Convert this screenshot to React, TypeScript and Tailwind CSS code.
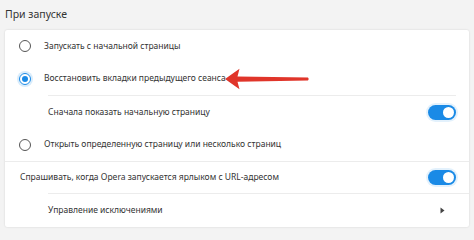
import React from 'react';

function Radio({ checked }: { checked?: boolean }) {
  if (checked) {
    return (
      <span className="flex h-[12px] w-[12px] shrink-0 items-center justify-center rounded-full border-[1.5px] border-[#1a8ae6] shadow-[0_0_0_2px_#d9ecfb]">
        <span className="h-[6px] w-[6px] rounded-full bg-[#1a8ae6]" />
      </span>
    );
  }
  return <span className="h-[12px] w-[12px] shrink-0 rounded-full border-[1.5px] border-[#555]" />;
}

function Toggle() {
  return (
    <span className="flex h-[15px] w-[28px] shrink-0 items-center justify-end rounded-full bg-[#1a8ae6] pr-[2px] shadow-[0_0_0_2px_#e3f1fc]">
      <span className="h-[11px] w-[11px] rounded-full bg-white" />
    </span>
  );
}

function Arrow() {
  return (
    <svg className="pointer-events-none absolute left-[224px] top-[68px]" width="86" height="22" viewBox="0 0 86 22">
      <path d="M1 11 L15.5 0.8 L13.5 8.4 L84 9.6 Q85.5 11 84 12.4 L13.5 13.8 L15.5 21.2 Z" fill="#e0352a" />
    </svg>
  );
}

export default function App() {
  const text = 'text-[8.5px] text-[#333]';
  return (
    <div className="relative h-[240px] w-[474px] overflow-hidden bg-[#f3f3f3] font-['Noto_Sans',sans-serif]">
      <div className="flex h-[30px] items-center px-[5px] text-[10.5px] text-[#333]">При запуске</div>
      <div className="mx-[5px] flex flex-col rounded-[2px] bg-white shadow-[0_0_2px_rgba(0,0,0,0.15)]">
        <div className="flex h-[32px] items-center gap-[13px] pl-[14px]">
          <Radio />
          <span className={text}>Запускать с начальной страницы</span>
        </div>
        <div className="flex h-[33px] items-center gap-[13px] pl-[14px]">
          <Radio checked />
          <span className={text}>Восстановить вкладки предыдущего сеанса</span>
        </div>
        <div className="ml-[43px] mr-[13px] h-px bg-[#ececec]" />
        <div className="flex h-[32px] items-center justify-between pl-[43px] pr-[13px]">
          <span className={text}>Сначала показать начальную страницу</span>
          <Toggle />
        </div>
        <div className="flex h-[33px] items-center gap-[13px] pl-[14px]">
          <Radio />
          <span className={text}>Открыть определенную страницу или несколько страниц</span>
        </div>
        <div className="h-px bg-[#ececec]" />
        <div className="flex h-[31px] items-center justify-between pl-[15px] pr-[13px]">
          <span className={text}>Спрашивать, когда Opera запускается ярлыком с URL-адресом</span>
          <Toggle />
        </div>
        <div className="ml-[43px] h-px bg-[#ececec]" />
        <div className="flex h-[33px] items-center justify-between pl-[43px] pr-[24px]">
          <span className={text}>Управление исключениями</span>
          <svg width="5" height="7" viewBox="0 0 5 7">
            <path d="M0.5 0.5 L4.5 3.5 L0.5 6.5 Z" fill="#444" />
          </svg>
        </div>
      </div>
      <Arrow />
    </div>
  );
}
